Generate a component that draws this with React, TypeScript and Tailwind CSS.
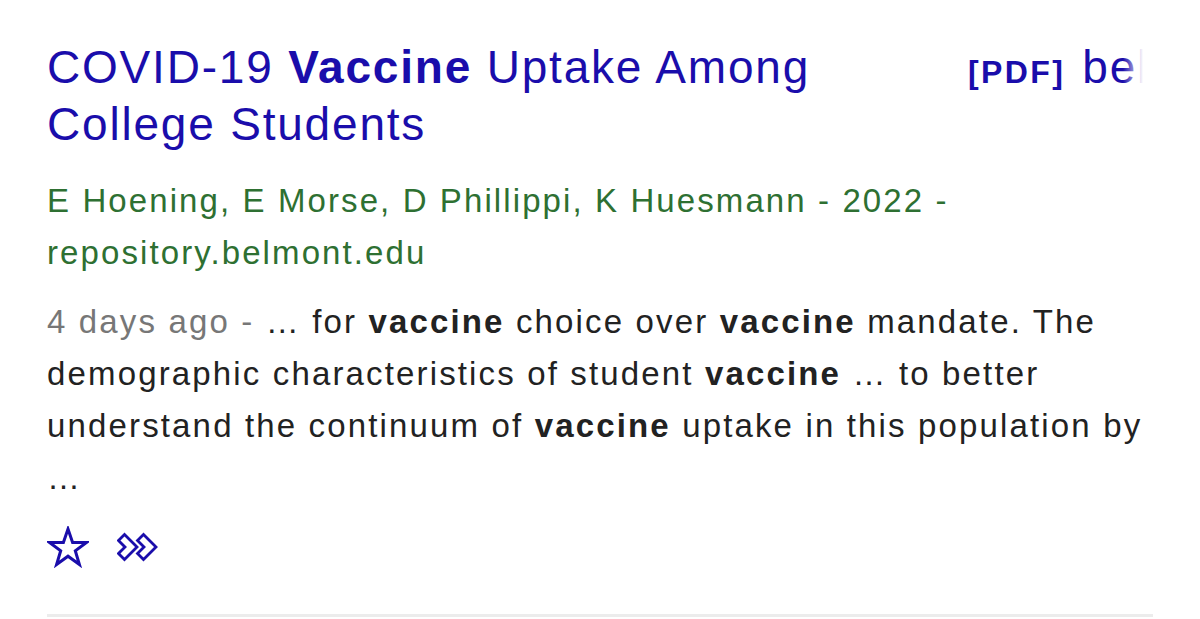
import React from 'react';

const font = { fontFamily: '"Liberation Sans", Arial, sans-serif' };

function Star() {
  return (
    <svg width="42" height="42" viewBox="0 0 42 42" className="shrink-0">
      <polygon
        points="21,3 25.6,16.4 39.5,16.4 28.3,24.8 32.4,38.5 21,30.2 9.6,38.5 13.7,24.8 2.5,16.4 16.4,16.4"
        fill="none"
        stroke="#1a0dab"
        strokeWidth="3"
        strokeLinejoin="miter"
      />
    </svg>
  );
}

function Cite() {
  const chevron = (dx: number) =>
    `${dx + 1.5},${8.5} ${dx + 7.5},${2.5} ${dx + 20},${15} ${dx + 7.5},${27.5} ${dx + 1.5},${21.5} ${dx + 8},${15}`;
  return (
    <svg width="42" height="30" viewBox="0 0 42 30" className="shrink-0">
      <polygon points={chevron(0)} fill="white" stroke="#1a0dab" strokeWidth="2.8" />
      <polygon points={chevron(19)} fill="white" stroke="#1a0dab" strokeWidth="2.8" />
    </svg>
  );
}

export default function App() {
  return (
    <div className="w-[1200px] h-[619px] bg-white overflow-hidden" style={font}>
      <div className="pl-[47px] pr-[47px] pt-[39px]">
        <div className="flex items-start">
          <h3 className="w-[900px] shrink-0 whitespace-nowrap text-[46px] leading-[57px] text-[#1a0dab] tracking-[1.8px]">
            COVID-19 <b>Vaccine</b> Uptake Among
            <br />
            College Students
          </h3>
          <div className="flex items-baseline gap-[17px] ml-[21px] w-[175px] overflow-hidden whitespace-nowrap leading-[57px] relative">
            <span className="text-[32px] font-bold text-[#1a0dab] tracking-[2.4px]">[PDF]</span>
            <span className="text-[46px] text-[#1a0dab] tracking-[1.8px]">belmont.edu</span>
            <div className="absolute right-0 top-0 h-full w-[20px] bg-gradient-to-r from-white/0 to-white" />
          </div>
        </div>

        <div className="mt-[22px] whitespace-nowrap text-[33px] leading-[52px] text-[#2e7032] tracking-[2.1px]">
          E Hoening, E Morse, D Phillippi, K Huesmann - 2022 -
          <br />
          repository.belmont.edu
        </div>

        <div className="mt-[17px] whitespace-nowrap text-[33px] leading-[52px] text-[#222222] tracking-[2.15px]">
          <span className="text-[#777777]">4 days ago - </span>… for <b>vaccine</b> choice over{' '}
          <b>vaccine</b> mandate. The
          <br />
          demographic characteristics of student <b>vaccine</b> … to better
          <br />
          understand the continuum of <b>vaccine</b> uptake in this population by
          <br />
          <span className="tracking-[1px]">…</span>
        </div>

        <div className="flex items-center gap-[28px] mt-[22px] h-[42px]">
          <Star />
          <Cite />
        </div>

        <div className="mt-[46px] h-[3px] bg-[#ececec] w-[1106px]" />
      </div>
    </div>
  );
}
